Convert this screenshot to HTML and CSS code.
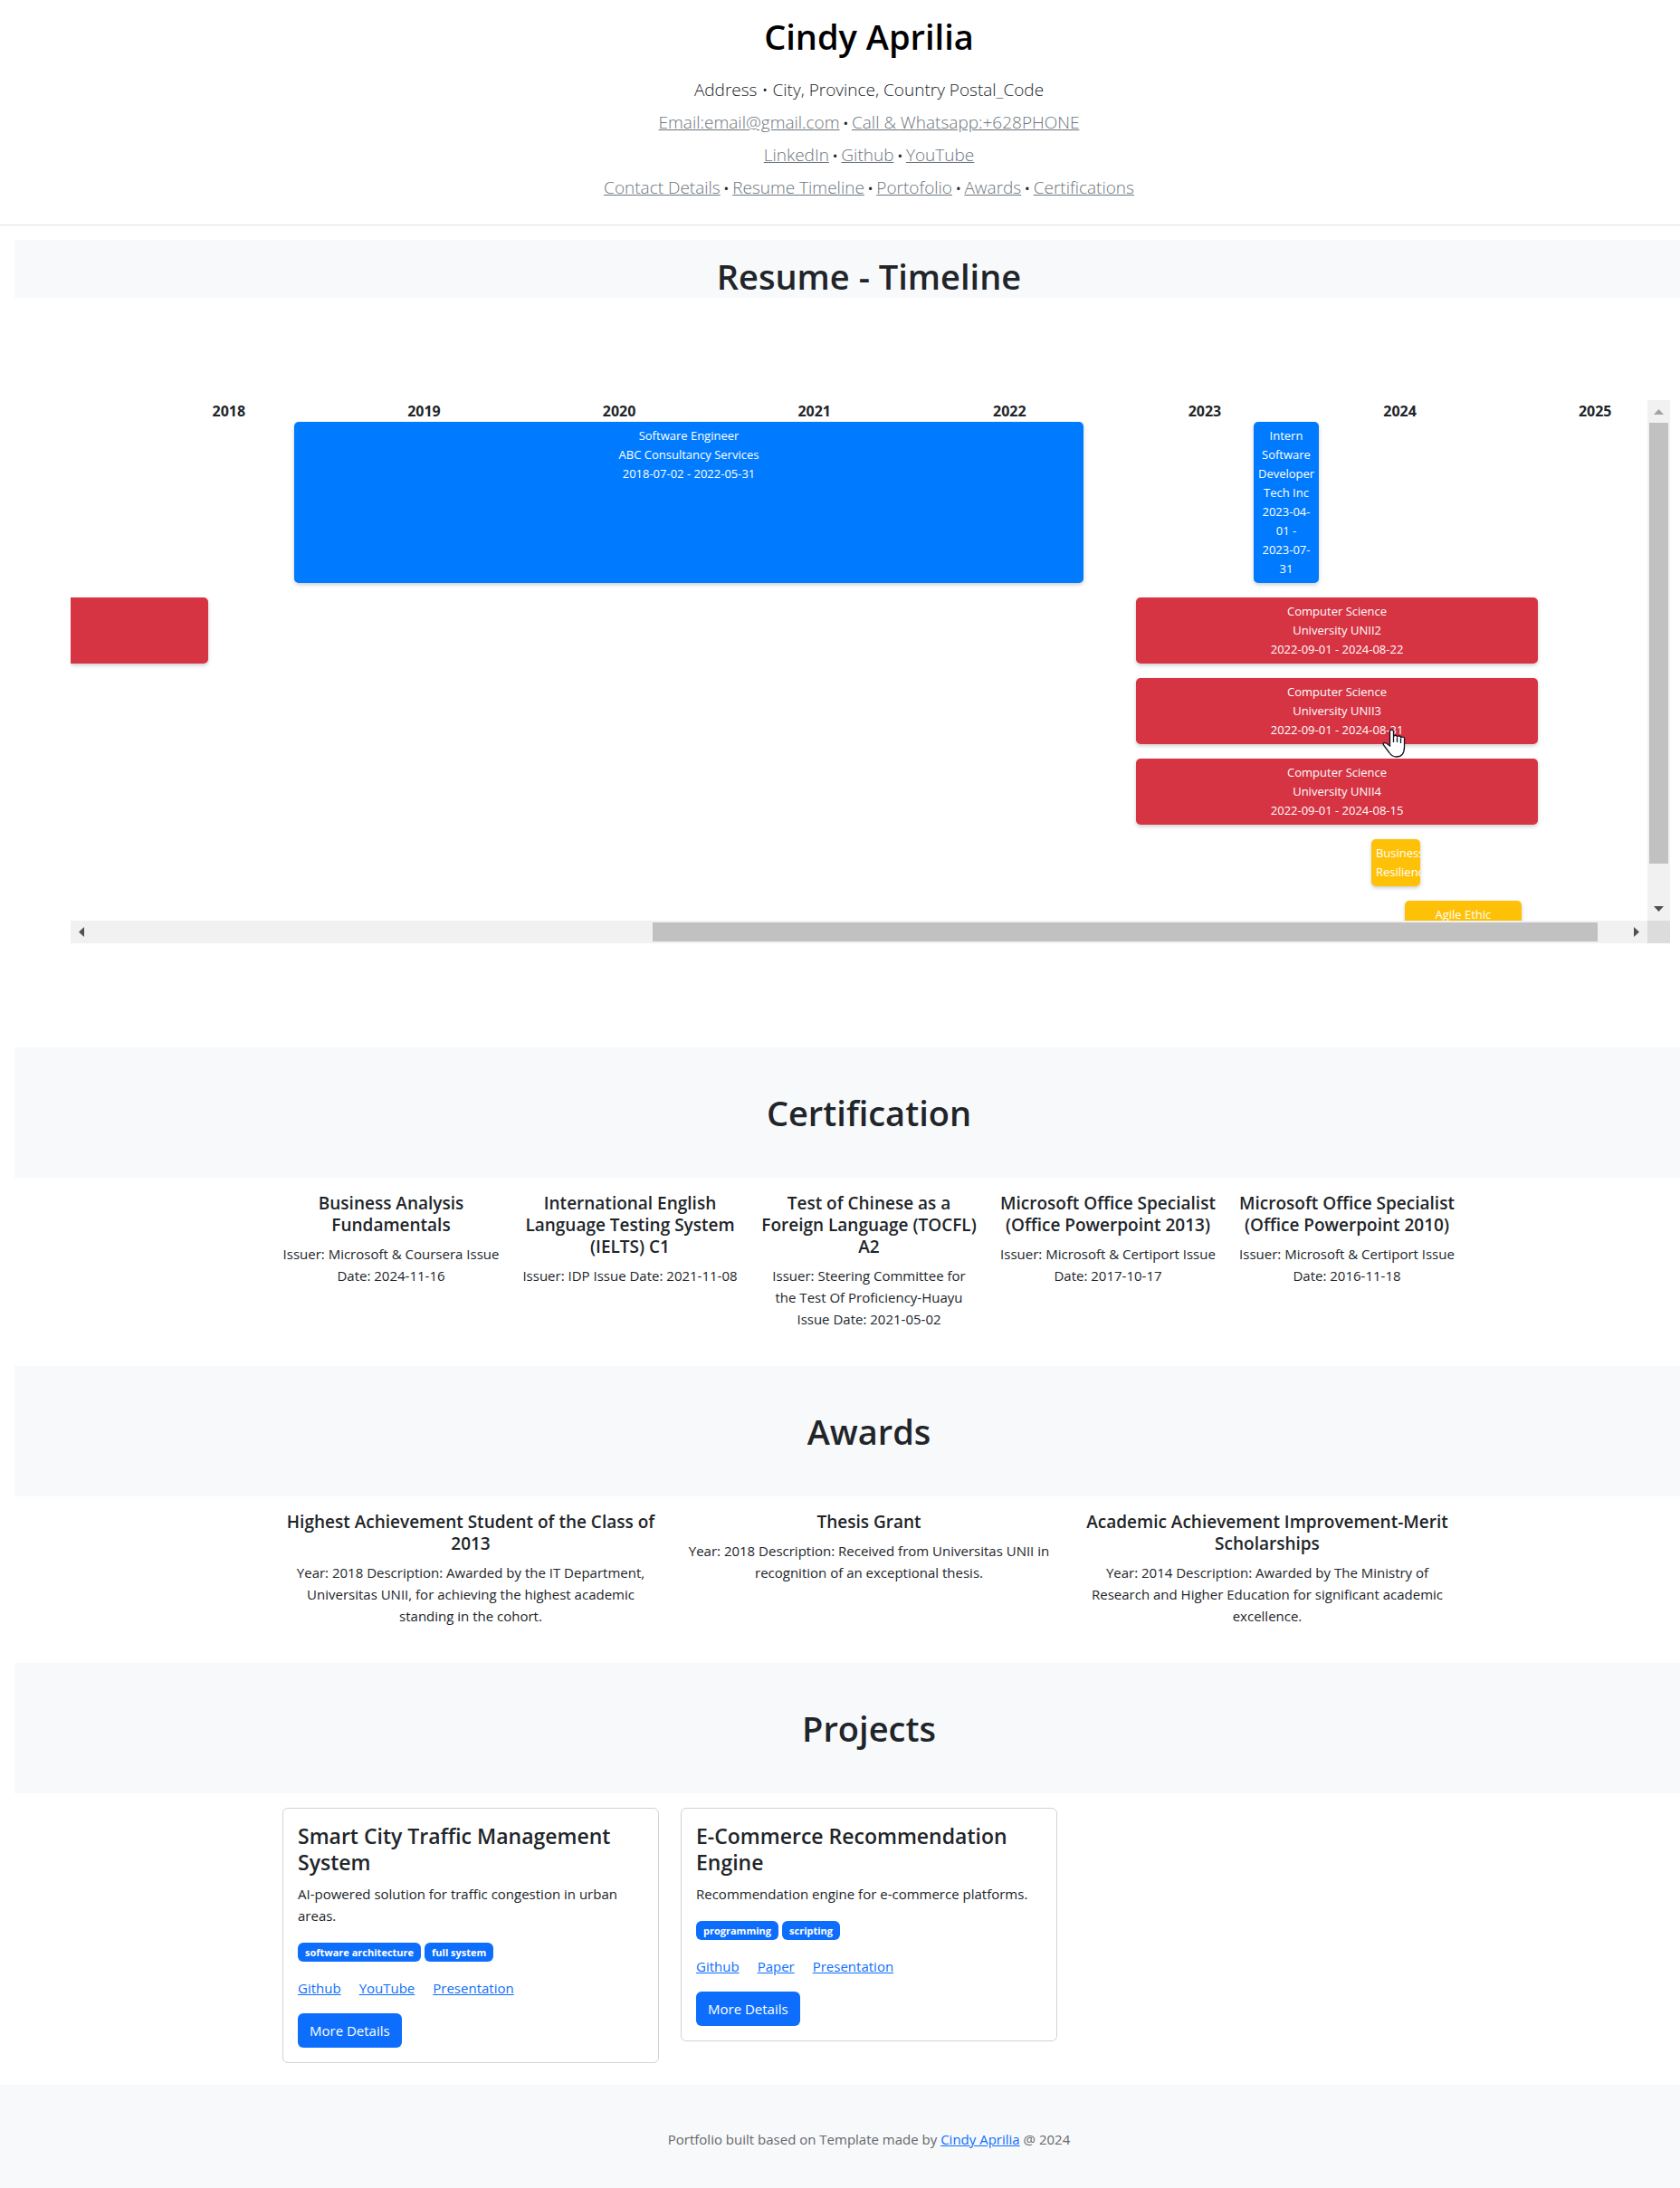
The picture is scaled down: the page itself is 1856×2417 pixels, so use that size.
FILE: index.html
```html
<!DOCTYPE html>
<html lang="en">
<head>
<meta charset="utf-8">
<meta name="viewport" content="width=device-width, initial-scale=1">
<title>Cindy Aprilia - Resume</title>
<link rel="stylesheet" href="styles.css">
</head>
<body>
<header class="site-header" id="contact">
  <h1 class="name">Cindy Aprilia</h1>
  <p class="line"><span class="lead">Address • City, Province, Country Postal_Code</span></p>
  <p class="line"><a class="lead" href="#email">Email:email@gmail.com</a> • <a class="lead" href="#call">Call &amp; Whatsapp:+628PHONE</a></p>
  <p class="line"><a class="lead" href="#linkedin">LinkedIn</a> • <a class="lead" href="#github">Github</a> • <a class="lead" href="#youtube">YouTube</a></p>
  <nav class="line"><a class="lead" href="#contact">Contact Details</a> • <a class="lead" href="#timeline">Resume Timeline</a> • <a class="lead" href="#projects">Portofolio</a> • <a class="lead" href="#awards">Awards</a> • <a class="lead" href="#certification">Certifications</a></nav>
</header>

<main>
  <section id="timeline">
    <div class="band band-short"><h2 class="band-title">Resume - Timeline</h2></div>
    <div class="timeline">
      <div class="chart">
        <div class="years">
          <span>2018</span><span>2019</span><span>2020</span><span>2021</span><span>2022</span><span>2023</span><span>2024</span><span>2025</span>
        </div>
        <div class="rows">
          <div class="row">
            <div class="event work" style="margin-left:14.18%;width:50.06%">Software Engineer<br>ABC Consultancy Services<br>2018-07-02 - 2022-05-31</div>
            <div class="event work" style="margin-left:10.79%;width:4.13%">Intern<br>Software<br>Developer<br>Tech Inc<br>2023-04-<br>01 -<br>2023-07-<br>31</div>
          </div>
          <div class="row">
            <div class="event study open-start" style="width:8.73%"></div>
            <div class="event study" style="margin-left:58.84%;width:25.49%">Computer Science<br>University UNII2<br>2022-09-01 - 2024-08-22</div>
          </div>
          <div class="row">
            <div class="event study" style="margin-left:67.57%;width:25.49%">Computer Science<br>University UNII3<br>2022-09-01 - 2024-08-31</div>
          </div>
          <div class="row">
            <div class="event study" style="margin-left:67.57%;width:25.49%">Computer Science<br>University UNII4<br>2022-09-01 - 2024-08-15</div>
          </div>
          <div class="row">
            <div class="event course clipped" style="margin-left:82.49%;width:3.1%">Business<br>Resilience</div>
          </div>
          <div class="row">
            <div class="event course" style="margin-left:84.61%;width:7.4%">Agile Ethic</div>
          </div>
        </div>
        <svg class="pointer" viewBox="0 0 26 32" aria-hidden="true"><path d="M8.500 19V3.200a2 2 0 0 1 4 0V9a2 2 0 0 1 4 .5 2 2 0 0 1 4 1 2 2 0 0 1 4 1.500V20c0 7-3 11-9 11-4 0-6-2-8-5l-6-8c-1-2 1-3 3-2z" fill="#fff" stroke="#112" stroke-width="1.300"/><path d="M12.500 9v6M16.500 10v5M20.500 11v5" fill="none" stroke="#112" stroke-width="1.300"/></svg>
      </div>
      <div class="bar-v">
        <svg class="arrow" viewBox="0 0 25 25" aria-hidden="true"><path d="M7 16h11l-5.500-6z" fill="#a3a3a3"/></svg>
        <div class="track-v"><div class="thumb-v"></div></div>
        <svg class="arrow" viewBox="0 0 25 25" aria-hidden="true"><path d="M7 9h11l-5.500 6z" fill="#505050"/></svg>
      </div>
      <div class="bar-h">
        <svg class="arrow" viewBox="0 0 25 25" aria-hidden="true"><path d="M15 7v11l-6-5.500z" fill="#505050"/></svg>
        <div class="track-h"><div class="thumb-h"></div></div>
        <svg class="arrow" viewBox="0 0 25 25" aria-hidden="true"><path d="M10 7v11l6-5.500z" fill="#505050"/></svg>
      </div>
      <div class="corner"></div>
    </div>
  </section>

  <section id="certification">
    <div class="band"><h2 class="band-title">Certification</h2></div>
    <div class="container five">
      <article><h3>Business Analysis Fundamentals</h3><p>Issuer: Microsoft &amp; Coursera Issue Date: 2024-11-16</p></article>
      <article><h3>International English Language Testing System (IELTS) C1</h3><p>Issuer: IDP Issue Date: 2021-11-08</p></article>
      <article><h3>Test of Chinese as a Foreign Language (TOCFL) A2</h3><p>Issuer: Steering Committee for the Test Of Proficiency-Huayu Issue Date: 2021-05-02</p></article>
      <article><h3>Microsoft Office Specialist (Office Powerpoint 2013)</h3><p>Issuer: Microsoft &amp; Certiport Issue Date: 2017-10-17</p></article>
      <article><h3>Microsoft Office Specialist (Office Powerpoint 2010)</h3><p>Issuer: Microsoft &amp; Certiport Issue Date: 2016-11-18</p></article>
    </div>
  </section>

  <section id="awards">
    <div class="band"><h2 class="band-title">Awards</h2></div>
    <div class="container three">
      <article><h3>Highest Achievement Student of the Class of 2013</h3><p>Year: 2018 Description: Awarded by the IT Department, Universitas UNII, for achieving the highest academic standing in the cohort.</p></article>
      <article><h3>Thesis Grant</h3><p>Year: 2018 Description: Received from Universitas UNII in recognition of an exceptional thesis.</p></article>
      <article><h3>Academic Achievement Improvement-Merit Scholarships</h3><p>Year: 2014 Description: Awarded by The Ministry of Research and Higher Education for significant academic excellence.</p></article>
    </div>
  </section>

  <section id="projects">
    <div class="band"><h2 class="band-title">Projects</h2></div>
    <div class="container three cards">
      <article class="card">
        <h3 class="card-title">Smart City Traffic Management System</h3>
        <p class="card-text">AI-powered solution for traffic congestion in urban areas.</p>
        <div class="badges"><span class="badge">software architecture</span><span class="badge">full system</span></div>
        <div class="links"><a href="#github">Github</a><a href="#youtube">YouTube</a><a href="#presentation">Presentation</a></div>
        <button class="btn" type="button">More Details</button>
      </article>
      <article class="card">
        <h3 class="card-title">E-Commerce Recommendation Engine</h3>
        <p class="card-text">Recommendation engine for e-commerce platforms.</p>
        <div class="badges"><span class="badge">programming</span><span class="badge">scripting</span></div>
        <div class="links"><a href="#github">Github</a><a href="#paper">Paper</a><a href="#presentation">Presentation</a></div>
        <button class="btn" type="button">More Details</button>
      </article>
    </div>
  </section>
</main>

<footer class="site-footer">Portfolio built based on Template made by <a href="#contact">Cindy Aprilia</a> @ 2024</footer>
</body>
</html>
```
FILE: styles.css
```css
* { box-sizing: border-box; }

body {
  margin: 0;
  background: #fff;
  color: #212529;
  font-family: "Open Sans", "Noto Sans", sans-serif;
  font-size: 15px;
  line-height: 24px;
}

h1, h2, h3, p { margin: 0; }
a { color: #0d6efd; }

.site-header {
  padding: 16px 0 20px 64px;
  border-bottom: 1px solid #dee2e6;
  text-align: center;
}
.name {
  margin-bottom: 20px;
  color: #000;
  font-size: 38px;
  font-weight: 600;
  line-height: 48px;
}
.line { height: 36px; }
.lead {
  font-size: 19px;
  font-weight: 300;
  line-height: 30px;
}
a.lead { color: #6c757d; }

.band {
  margin-left: 16px;
  padding: 48px 0 48px 48px;
  background: #f8f9fb;
  text-align: center;
}
.band-short {
  margin-top: 16px;
  padding-top: 16px;
  padding-bottom: 0;
}
.band-title {
  font-size: 38px;
  font-weight: 600;
  line-height: 48px;
}

/* Timeline viewport with its scroll bars */
.timeline {
  display: grid;
  grid-template-columns: 1fr 25px;
  grid-template-rows: 575px 25px;
  margin: 113px 11px 115px 78px;
}
.chart { position: relative; overflow: hidden; min-width: 0; }
.years { display: flex; padding-left: 67px; margin-right: -50px; }
.years span {
  flex: 1;
  font-size: 16px;
  font-weight: 700;
  text-align: center;
}
.rows { display: flex; flex-direction: column; gap: 16px; }
.row { display: flex; }
.event {
  flex: none;
  padding: 5px;
  border-radius: 5px;
  box-shadow: 0 2px 4px rgba(0, 0, 0, .2);
  color: #fff;
  font-size: 13px;
  line-height: 21px;
  text-align: center;
}
.work { background: #007bff; }
.study { background: #d63343; }
.course { background: #ffc107; }
.open-start { border-radius: 0 5px 5px 0; }
.clipped { overflow: hidden; text-align: left; }
.pointer {
  position: absolute;
  left: 83.2%;
  top: 363px;
  width: 26px;
  height: 32px;
}

.arrow { flex: none; width: 25px; height: 25px; }
.bar-v { display: flex; flex-direction: column; background: #f1f1f1; }
.bar-h { display: flex; background: #f1f1f1; }
.track-v { flex: 1; padding: 0 2px; }
.track-h { flex: 1; padding: 2px 0; }
.thumb-v { height: 92.8%; background: #c1c1c1; }
.thumb-h { height: 100%; margin-left: 36.5%; width: 61.7%; background: #c1c1c1; }
.corner { background: #dcdcdc; }

.container {
  display: grid;
  gap: 24px;
  width: 100%;
  max-width: 1384px;
  margin: 0 auto;
  padding: 16px 12px 40px 76px;
  text-align: center;
}
.five { grid-template-columns: repeat(5, 1fr); }
.three { grid-template-columns: repeat(3, 1fr); }
.container h3 {
  margin-bottom: 8px;
  font-size: 19px;
  font-weight: 600;
  line-height: 24px;
}

.cards { align-items: start; padding-bottom: 24px; text-align: left; }
.card {
  padding: 16px;
  border: 1px solid #d3d3d4;
  border-radius: 6px;
}
.card .card-title { font-size: 23px; line-height: 29px; }
.card-text { margin-bottom: 16px; }
.badges {
  display: flex;
  align-items: center;
  gap: 4px;
  height: 24px;
  margin-bottom: 16px;
}
.badge {
  padding: 0 8px;
  border-radius: 6px;
  background: #0d6efd;
  color: #fff;
  font-size: 11px;
  font-weight: 700;
  line-height: 21px;
}
.links { display: flex; gap: 20px; margin-bottom: 16px; }
.btn {
  display: block;
  height: 38px;
  padding: 0 13px;
  border: 0;
  border-radius: 6px;
  background: #0d6efd;
  color: #fff;
  font: inherit;
}

.site-footer {
  padding: 48px 0 42px 64px;
  background: #f8f9fb;
  color: #64676a;
  text-align: center;
}
```
